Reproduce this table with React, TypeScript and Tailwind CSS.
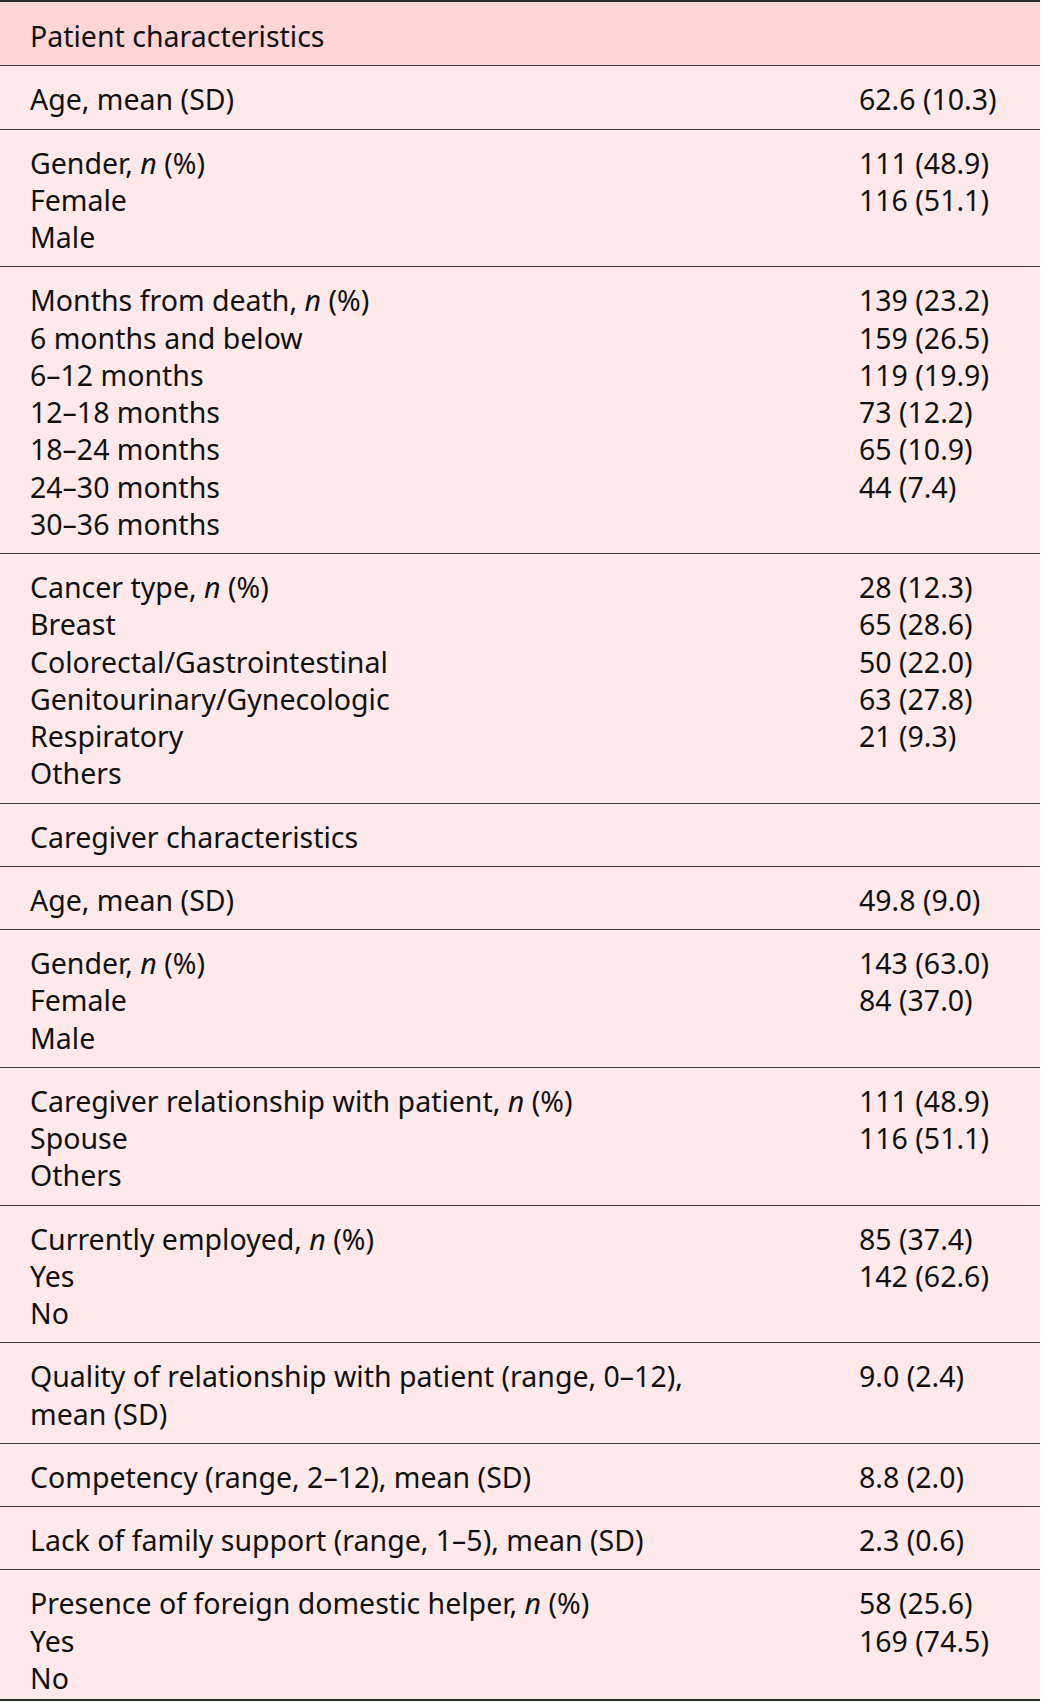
import React from "react";

type Row = { header?: boolean; left: React.ReactNode[]; right: string[] };

const N = () => <i>n</i>;

const rows: Row[] = [
  { header: true, left: ["Patient characteristics"], right: [] },
  { left: ["Age, mean (SD)"], right: ["62.6 (10.3)"] },
  { left: [<>Gender, <N /> (%)</>, "Female", "Male"], right: ["111 (48.9)", "116 (51.1)"] },
  {
    left: [<>Months from death, <N /> (%)</>, "6 months and below", "6–12 months", "12–18 months", "18–24 months", "24–30 months", "30–36 months"],
    right: ["139 (23.2)", "159 (26.5)", "119 (19.9)", "73 (12.2)", "65 (10.9)", "44 (7.4)"],
  },
  {
    left: [<>Cancer type, <N /> (%)</>, "Breast", "Colorectal/Gastrointestinal", "Genitourinary/Gynecologic", "Respiratory", "Others"],
    right: ["28 (12.3)", "65 (28.6)", "50 (22.0)", "63 (27.8)", "21 (9.3)"],
  },
  { left: ["Caregiver characteristics"], right: [] },
  { left: ["Age, mean (SD)"], right: ["49.8 (9.0)"] },
  { left: [<>Gender, <N /> (%)</>, "Female", "Male"], right: ["143 (63.0)", "84 (37.0)"] },
  { left: [<>Caregiver relationship with patient, <N /> (%)</>, "Spouse", "Others"], right: ["111 (48.9)", "116 (51.1)"] },
  { left: [<>Currently employed, <N /> (%)</>, "Yes", "No"], right: ["85 (37.4)", "142 (62.6)"] },
  { left: ["Quality of relationship with patient (range, 0–12),", "mean (SD)"], right: ["9.0 (2.4)"] },
  { left: ["Competency (range, 2–12), mean (SD)"], right: ["8.8 (2.0)"] },
  { left: ["Lack of family support (range, 1–5), mean (SD)"], right: ["2.3 (0.6)"] },
  { left: [<>Presence of foreign domestic helper, <N /> (%)</>, "Yes", "No"], right: ["58 (25.6)", "169 (74.5)"] },
];

export default function App() {
  return (
    <div className="w-[1040px] bg-white text-[#111] text-[28.5px] leading-[37.25px]" style={{ fontFamily: '"Noto Sans", "Open Sans", sans-serif' }}>
      <div className="border-t-2 border-b-2 border-[#2a2a2a]">
        {rows.map((r, i) => {
          const last = i === rows.length - 1;
          const pad = r.header ? "pt-[16px] pb-[10px] " : last ? "pt-[15px] pb-[2px] " : "pt-[15px] pb-[10px] ";
          return (
            <div
              key={i}
              className={
                "flex " +
                pad +
                (last ? "" : "border-b border-[#3a3a3a] ") +
                (r.header ? "bg-[#ffd5d6]" : "bg-[#ffe9ea]")
              }
            >
              <div className="w-[859px] pl-[30px] shrink-0 whitespace-nowrap">
                {r.left.map((l, j) => (
                  <div key={j}>{l}</div>
                ))}
              </div>
              <div className="flex-1 whitespace-nowrap">
                {r.right.map((l, j) => (
                  <div key={j}>{l}</div>
                ))}
              </div>
            </div>
          );
        })}
      </div>
    </div>
  );
}
